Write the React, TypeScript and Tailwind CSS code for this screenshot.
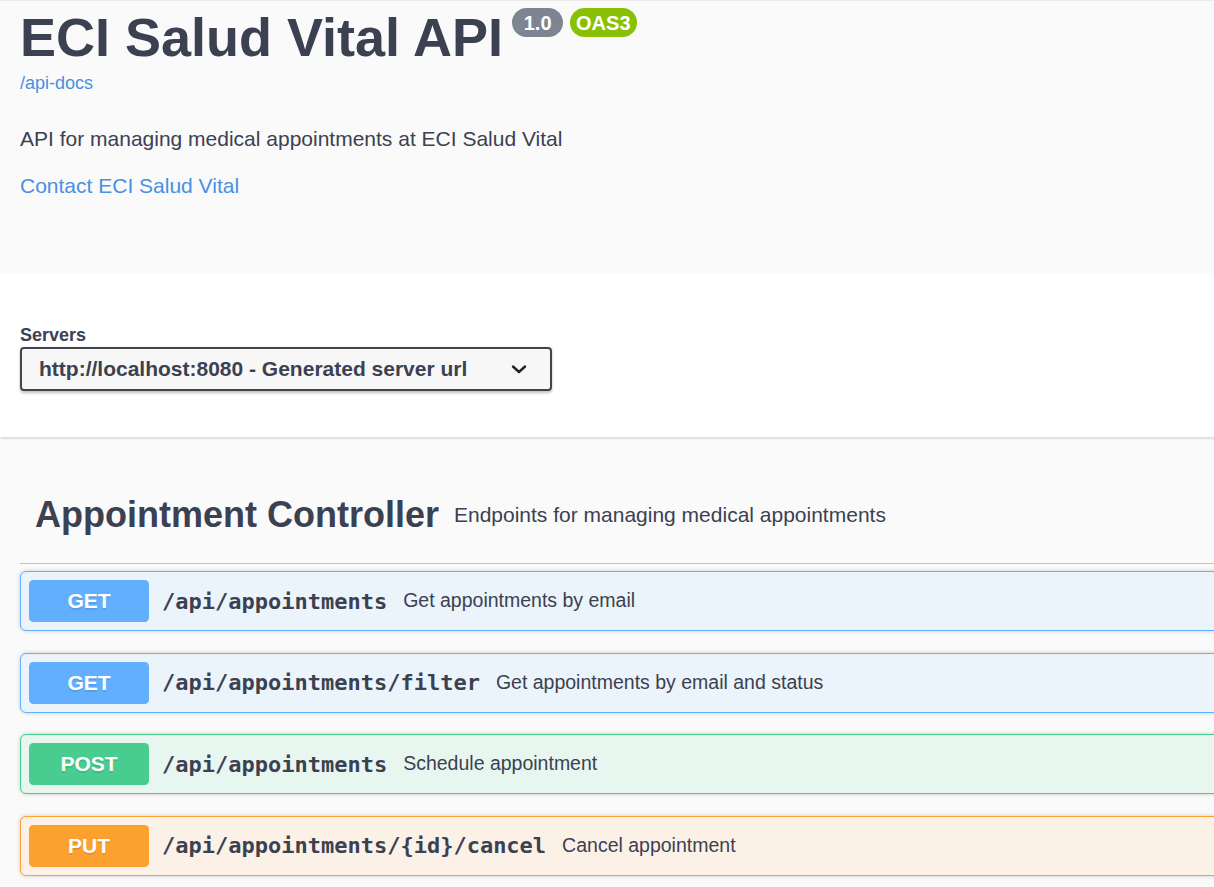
import React from 'react';

type Method = 'GET' | 'POST' | 'PUT';

interface Endpoint {
  method: Method;
  path: string;
  summary: string;
}

const endpoints: Endpoint[] = [
  { method: 'GET', path: '/api/appointments', summary: 'Get appointments by email' },
  { method: 'GET', path: '/api/appointments/filter', summary: 'Get appointments by email and status' },
  { method: 'POST', path: '/api/appointments', summary: 'Schedule appointment' },
  { method: 'PUT', path: '/api/appointments/{id}/cancel', summary: 'Cancel appointment' },
];

const blockStyles: Record<Method, { block: string; badge: string }> = {
  GET: { block: 'bg-[#ebf3fb] border-[#61affe]', badge: 'bg-[#61affe]' },
  POST: { block: 'bg-[#e8f6f0] border-[#49cc90]', badge: 'bg-[#49cc90]' },
  PUT: { block: 'bg-[#fbf1e6] border-[#fca130]', badge: 'bg-[#fca130]' },
};

const sans = "font-['Liberation_Sans',Arial,sans-serif]";

const OpBlock: React.FC<{ ep: Endpoint }> = ({ ep }) => {
  const s = blockStyles[ep.method];
  return (
    <div className={`flex items-center h-[60px] pl-[8px] py-[7px] mb-[21.5px] border-[1.5px] rounded-[6px] shadow-[0_0_4.5px_rgba(0,0,0,0.19)] ${s.block}`}>
      <span
        className={`w-[120px] h-[42px] shrink-0 flex items-center justify-center rounded-[4.5px] text-white text-[21px] font-bold [text-shadow:0_1.5px_0_rgba(0,0,0,0.1)] ${s.badge}`}
      >
        {ep.method}
      </span>
      <span className="pl-[13px] pr-[16px] font-['DejaVu_Sans_Mono',monospace] font-bold text-[22px] text-[#3b4151] whitespace-nowrap">
        {ep.path}
      </span>
      <span className="text-[19.5px] text-[#3b4151] whitespace-nowrap">{ep.summary}</span>
    </div>
  );
};

const App: React.FC = () => {
  return (
    <div className={`min-h-screen w-full overflow-hidden bg-[#fafafa] ${sans} text-[#3b4151]`}>
      <div className="w-[1320px]">
        {/* info */}
        <div className="border-t border-[#ececec] px-[20px] pb-[75px]">
          <div className="flex items-start mt-[5px]">
            <h2 className="text-[54px] leading-[62px] font-bold text-[#3b4151] whitespace-nowrap">ECI Salud Vital API</h2>
            <span className="ml-[9px] mt-[2px] h-[29px] flex items-center px-[6px] rounded-full bg-[#7d8492] text-white text-[20px] font-bold whitespace-pre">
              {' 1.0 '}
            </span>
            <span className="ml-[7px] mt-[2px] h-[29px] flex items-center px-[6px] rounded-full bg-[#89bf04] text-white text-[20px] font-bold">
              OAS3
            </span>
          </div>
          <a className="block mt-[5px] text-[18px] leading-[21px] text-[#4990e2]">/api-docs</a>
          <p className="mt-[33px] text-[21px] leading-[24px]">API for managing medical appointments at ECI Salud Vital</p>
          <a className="block mt-[23px] text-[21px] leading-[24px] text-[#4990e2]">Contact ECI Salud Vital</a>
        </div>

        {/* servers */}
        <div className="bg-white shadow-[0_1.5px_3px_rgba(0,0,0,0.15)] px-[20px] pt-[52px] pb-[46px]">
          <div className="text-[18px] leading-[21px] font-bold">Servers</div>
          <div className="mt-[1px] w-[532px] h-[44px] flex items-center justify-between pl-[17px] pr-[23px] bg-[#f7f7f7] border-2 border-[#41444e] rounded-[4px] shadow-[0_1.5px_3px_rgba(0,0,0,0.25)]">
            <span className="text-[21px] font-bold">http://localhost:8080 - Generated server url</span>
            <svg width="16" height="10" viewBox="0 0 16 10" fill="none">
              <path d="M2 2.5 L8 8 L14 2.5" stroke="#222" strokeWidth="2.4" strokeLinecap="round" strokeLinejoin="round" />
            </svg>
          </div>
        </div>

        {/* tag section */}
        <div className="px-[20px] pt-[57px]">
          <div className="flex items-center pl-[15px] pb-[28px] border-b border-[#c1c3c7]">
            <h3 className="text-[36px] leading-[41px] font-bold whitespace-nowrap">Appointment Controller</h3>
            <span className="ml-[15px] text-[21px] leading-[24px] whitespace-nowrap">Endpoints for managing medical appointments</span>
          </div>
          <div className="mt-[7px]">
            {endpoints.map((ep, i) => (
              <OpBlock key={i} ep={ep} />
            ))}
          </div>
        </div>
      </div>
    </div>
  );
};

export default App;
